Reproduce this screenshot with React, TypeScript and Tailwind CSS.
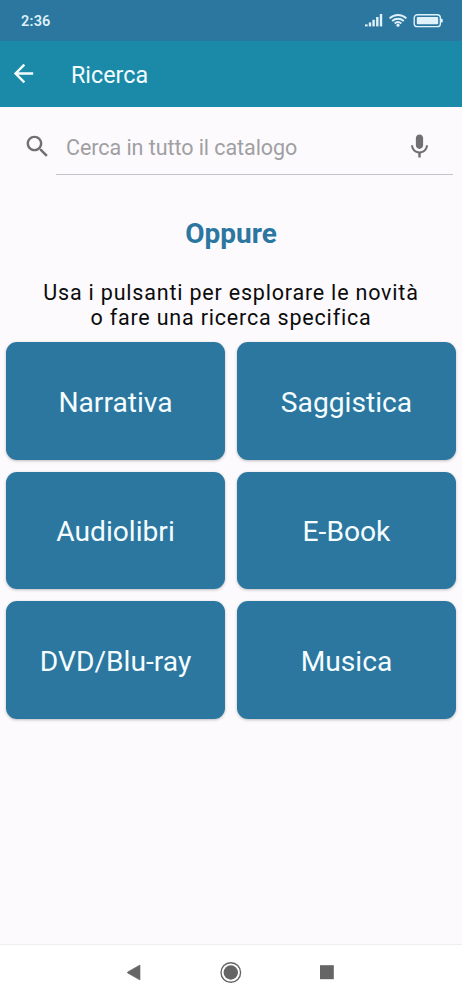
const categories = ["Narrativa", "Saggistica", "Audiolibri", "E-Book", "DVD/Blu-ray", "Musica"];

function StatusBar() {
  return (
    <div className="flex h-[41px] shrink-0 items-center justify-between bg-[#2b77a0] pr-[19px] pl-[21px] text-[#dff1fa]">
      <span className="mt-[3px] text-[14.5px] leading-none font-semibold tracking-[0.2px]">2:36</span>
      <svg width="78" height="14" viewBox="0 0 78 14" fill="none">
        <g fill="currentColor">
          <rect x="0" y="10.4" width="2.6" height="2" />
          <rect x="3.8" y="8.4" width="2.4" height="4" />
          <rect x="7.4" y="5.8" width="2.4" height="6.6" />
          <rect x="11.1" y="3" width="2.4" height="9.4" />
          <rect x="14.8" y="0" width="2.4" height="12.4" />
          <circle cx="33" cy="11.2" r="1.6" />
          <rect x="51.8" y="3" width="21.4" height="7.2" rx="1" />
          <path d="M76 4.7h.6c.8 0 1.2.6 1.2 1.3v1.2c0 .7-.4 1.3-1.2 1.3H76z" />
        </g>
        <g stroke="currentColor" strokeWidth="1.9">
          <path d="M24.6 4.4C29.5-.1 36.5-.1 41.4 4.4" />
          <path d="M27.2 7c3.4-3 8.2-3 11.6 0" />
          <path d="M29.7 9.5c2-1.7 4.6-1.7 6.6 0" />
        </g>
        <rect x="49.2" y="0.7" width="26.2" height="11.9" rx="3.2" stroke="currentColor" strokeWidth="1.4" />
      </svg>
    </div>
  );
}

function Header() {
  return (
    <header className="flex h-[66px] shrink-0 items-center bg-[#1b8aa8] pl-[9px] text-[#f2fcff]">
      <svg className="mb-px" width="29" height="29" viewBox="0 0 24 24" fill="currentColor">
        <path d="M20 11H7.83l5.59-5.59L12 4l-8 8 8 8 1.41-1.41L7.83 13H20v-2z" />
      </svg>
      <h1 className="mt-[3px] ml-[33px] text-[23.3px] leading-none font-normal">Ricerca</h1>
    </header>
  );
}

function SearchField() {
  return (
    <div className="flex h-[68px] items-stretch pr-[9px] pl-[23px]">
      <svg className="mt-[25px] shrink-0 text-[#707072]" width="29" height="29" viewBox="0 0 24 24" fill="currentColor">
        <path d="M15.5 14h-.79l-.28-.27C15.41 12.59 16 11.11 16 9.5 16 5.91 13.09 3 9.5 3S3 5.91 3 9.5 5.91 16 9.5 16c1.61 0 3.09-.59 4.23-1.57l.27.28v.79l5 4.99L20.49 19l-4.99-5zm-6 0C7.01 14 5 11.99 5 9.5S7.01 5 9.5 5 14 7.01 14 9.5 11.99 14 9.5 14z" />
      </svg>
      <div className="ml-1 flex flex-1 justify-between border-b border-[#c5c4c8] pr-[19px] pl-[10px]">
        <span className="mt-[29px] text-[21.5px] leading-[24px] tracking-[-0.06px] text-[#a09fa2]">Cerca in tutto il catalogo</span>
        <svg className="mt-[25px] text-[#707072]" width="29" height="29" viewBox="0 0 24 24" fill="currentColor">
          <path d="M12 14c1.66 0 2.99-1.34 2.99-3L15 5c0-1.66-1.34-3-3-3S9 3.34 9 5v6c0 1.66 1.34 3 3 3zm5.3-3c0 3-2.54 5.1-5.3 5.1S6.7 14 6.7 11H5c0 3.41 2.72 6.23 6 6.72V21h2v-3.28c3.28-.48 6-3.3 6-6.72h-1.7z" />
        </svg>
      </div>
    </div>
  );
}

function NavigationBar() {
  return (
    <nav className="flex h-14 shrink-0 items-center justify-center border-t border-[#efedef] bg-white text-[#656565]">
      <svg width="210" height="24" viewBox="0 0 210 24" fill="currentColor">
        <path d="M1.6 11 14 4v15L1.6 12z" stroke="currentColor" strokeWidth="0.6" strokeLinejoin="round" />
        <circle cx="104.8" cy="11.5" r="9.8" fill="none" stroke="currentColor" strokeWidth="1.4" />
        <circle cx="104.8" cy="11.5" r="7.2" />
        <rect x="194" y="4.2" width="13.8" height="14" />
      </svg>
    </nav>
  );
}

export default function App() {
  return (
    <div className="flex h-[1000px] w-[462px] flex-col overflow-hidden bg-[#fcfafd] font-[Roboto,sans-serif]">
      <StatusBar />
      <Header />
      <main className="flex-1">
        <SearchField />
        <h2 className="mt-[43px] text-center text-[28px] leading-[32px] font-bold text-[#2b77a0]">Oppure</h2>
        <p className="mt-[30px] text-center text-[21.5px] leading-[25px] tracking-[0.8px] text-[#0b0b0c]">
          Usa i pulsanti per esplorare le novità
          <br />o fare una ricerca specifica
        </p>
        <div className="mt-[12.4px] grid grid-cols-2 gap-3 px-1.5">
          {categories.map((name) => (
            <button
              key={name}
              className="h-[117.5px] rounded-[11px] bg-[#2b77a0] pt-[3.4px] text-[28.2px] text-[#f5fdff] shadow-[0_1px_3px_rgba(0,0,0,0.25)]"
            >
              {name}
            </button>
          ))}
        </div>
      </main>
      <NavigationBar />
    </div>
  );
}
